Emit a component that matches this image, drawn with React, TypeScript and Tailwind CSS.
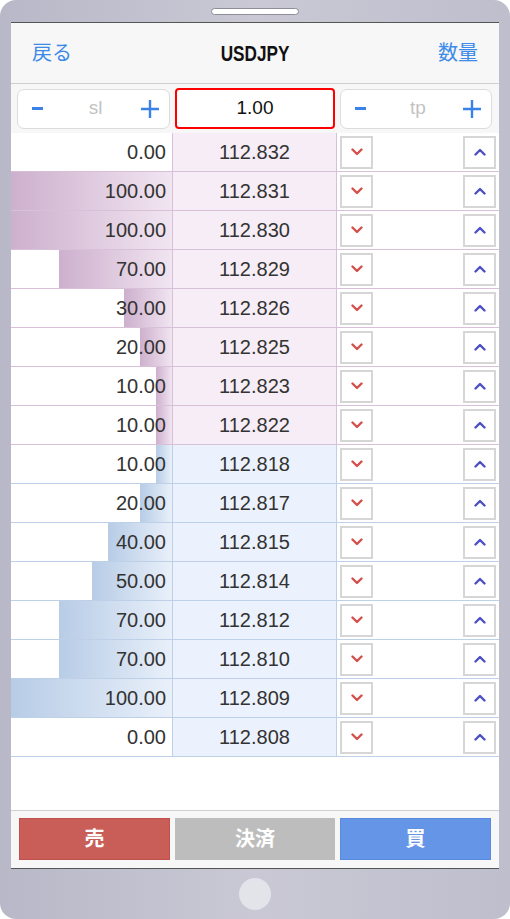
import React from 'react';

type Row = { vol: number; price: string };

const SELL: Row[] = [
  { vol: 0, price: '112.832' },
  { vol: 100, price: '112.831' },
  { vol: 100, price: '112.830' },
  { vol: 70, price: '112.829' },
  { vol: 30, price: '112.826' },
  { vol: 20, price: '112.825' },
  { vol: 10, price: '112.823' },
  { vol: 10, price: '112.822' },
];

const BUY: Row[] = [
  { vol: 10, price: '112.818' },
  { vol: 20, price: '112.817' },
  { vol: 40, price: '112.815' },
  { vol: 50, price: '112.814' },
  { vol: 70, price: '112.812' },
  { vol: 70, price: '112.810' },
  { vol: 100, price: '112.809' },
  { vol: 0, price: '112.808' },
];

const THEME = {
  sell: { line: 'border-[#d9c0d9]', cell: 'bg-[#f7edf6]', bar: 'bg-gradient-to-r from-[#cdb0cd] to-[#f1e5f1]' },
  buy:  { line: 'border-[#bdd0e8]', cell: 'bg-[#ecf2fd]', bar: 'bg-gradient-to-r from-[#b7cce6] to-[#e9f0fa]' },
};

const num = { fontFamily: '"Liberation Sans", Arial, sans-serif' };
const jp = { fontFamily: '"Liberation Sans", "Noto Sans CJK JP", sans-serif' };

function Chevron({ up }: { up?: boolean }) {
  return (
    <svg width="12" height="8" viewBox="0 0 12 8">
      <path
        d={up ? 'M1.5 6.5 L6 2 L10.5 6.5' : 'M1.5 1.5 L6 6 L10.5 1.5'}
        fill="none"
        stroke={up ? '#4b50c4' : '#d4504c'}
        strokeWidth="2.4"
        strokeLinecap="round"
        strokeLinejoin="round"
      />
    </svg>
  );
}

function StepBox({ label }: { label: string }) {
  return (
    <div className="h-[40px] flex items-center justify-between pl-[14px] pr-[9px] bg-white border border-[#dcdcdc] rounded-[7px]">
      <span className="w-[11px] h-[3px] bg-[#3b82e8]" />
      <span className="text-[19px] text-[#c3c3c3] ml-[8px]" style={num}>{label}</span>
      <svg width="20" height="20" viewBox="0 0 20 20">
        <path d="M10 1 V19 M1 10 H19" stroke="#3b82e8" strokeWidth="2.4" />
      </svg>
    </div>
  );
}

function BookRow({ row, side }: { row: Row; side: 'sell' | 'buy' }) {
  const t = THEME[side];
  return (
    <div className={`grid grid-cols-[162px_164px_162px] h-[39px] border-b ${t.line}`}>
      <div className={`relative border-r ${t.line} bg-white flex items-center justify-end pr-[6px]`}>
        {row.vol > 0 && (
          <div className={`absolute right-0 top-0 bottom-0 ${t.bar}`} style={{ width: `${row.vol}%` }} />
        )}
        <span className="relative text-[20px] text-[#333]" style={num}>{row.vol.toFixed(2)}</span>
      </div>
      <div className={`border-r ${t.line} ${t.cell} flex items-center justify-center`}>
        <span className="text-[20px] text-[#333]" style={num}>{row.price}</span>
      </div>
      <div className="bg-white flex items-center justify-between pl-[3px] pr-[3px]">
        <button className="w-[33px] h-[33px] border-2 border-[#d6d6d6] bg-white flex items-center justify-center">
          <Chevron />
        </button>
        <button className="w-[33px] h-[33px] border-2 border-[#d6d6d6] bg-white flex items-center justify-center">
          <Chevron up />
        </button>
      </div>
    </div>
  );
}

export default function App() {
  return (
    <div className="w-[510px] h-[919px] bg-white">
      <div className="h-full rounded-[16px] bg-gradient-to-r from-[#b9b8c8] via-[#c9c8d4] to-[#bfbecd] flex flex-col px-[11px]">
        {/* speaker slot */}
        <div className="h-[22px] flex items-center justify-center">
          <div className="w-[88px] h-[7px] rounded-full bg-white border border-[#8e8e98]" />
        </div>

        {/* screen */}
        <div className="flex-1 flex flex-col bg-white border-t border-b border-[#555]">
          <div className="h-[61px] flex items-center justify-between px-[21px] bg-[#f7f7f7] border-b border-[#cfcfcf]">
            <span className="text-[20px] text-[#3d8be8] w-[60px]" style={jp}>戻る</span>
            <span className="inline-block text-[22px] font-bold text-[#111] scale-x-[0.78]" style={num}>
              USDJPY
            </span>
            <span className="text-[20px] text-[#3d8be8] w-[60px] text-right" style={jp}>数量</span>
          </div>

          <div className="h-[49px] flex items-center gap-[5px] pl-[6px] pr-[7px] bg-[#f7f7f7]">
            <div className="w-[153px]"><StepBox label="sl" /></div>
            <div className="w-[160px] h-[41px] flex items-center justify-center bg-white border-2 border-[#ff0000] rounded-[4px]">
              <span className="text-[19px] text-[#111]" style={num}>1.00</span>
            </div>
            <div className="flex-1"><StepBox label="tp" /></div>
          </div>

          {SELL.map(r => <BookRow key={r.price} row={r} side="sell" />)}
          {BUY.map(r => <BookRow key={r.price} row={r} side="buy" />)}

          <div className="flex-1" />

          {/* order buttons */}
          <div className="h-[58px] border-t border-[#d0d0d0] bg-[#f7f7f7] flex items-start gap-[5px] pt-[7px] pl-[8px] pr-[8px]">
            <button className="w-[151px] h-[42px] bg-[#c95e59] border border-[#c0504b] text-white text-[20px] font-bold" style={jp}>売</button>
            <button className="w-[160px] h-[42px] bg-[#bdbdbd] text-white text-[20px] font-bold" style={jp}>決済</button>
            <button className="flex-1 h-[42px] bg-[#6595e7] border border-[#5a8ae0] text-white text-[20px] font-bold" style={jp}>買</button>
          </div>
        </div>

        {/* home button */}
        <div className="h-[50px] flex items-center justify-center">
          <div className="w-[32px] h-[32px] rounded-full bg-[#e3e3ea]" />
        </div>
      </div>
    </div>
  );
}
